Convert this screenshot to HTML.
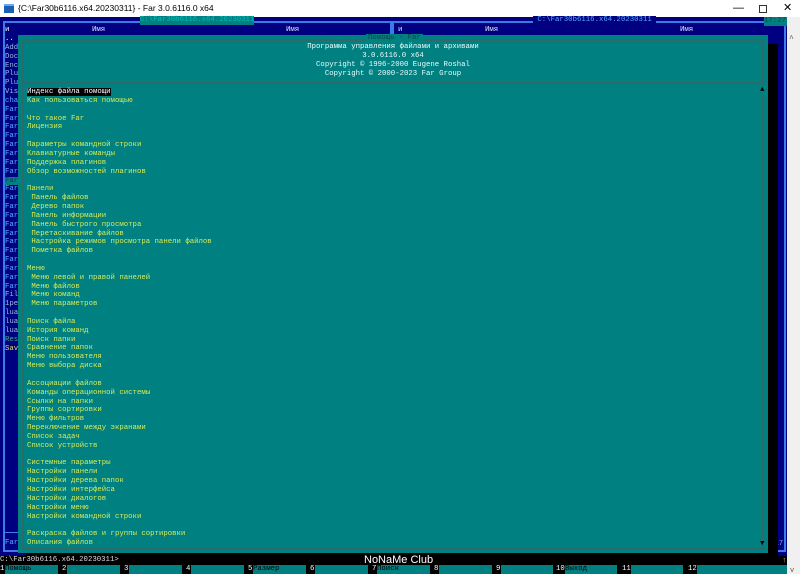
<!DOCTYPE html>
<html><head><meta charset="utf-8"><style>
*{margin:0;padding:0;box-sizing:border-box}
body{width:800px;height:574px;overflow:hidden;background:#fff;position:relative;font-family:"Liberation Mono","DejaVu Sans Mono",monospace;font-size:7.33px;line-height:8.84px}
.a{position:absolute;white-space:pre}
#tb{position:absolute;left:0;top:0;width:800px;height:17px;background:#fff;font-family:"Liberation Sans","DejaVu Sans",sans-serif;font-size:8.5px;line-height:17px;color:#000}
#con{position:absolute;left:0;top:17px;width:787px;height:557px;background:#000080}
#sb{position:absolute;left:787px;top:17px;width:13px;height:557px;background:#f0f0f0}
.pl{position:absolute;border:1px solid #3c7ce6}
.lc{color:#5fa8ff}
.ht{color:#d6ec58}
</style></head><body>
<div id="tb"><span style="position:absolute;left:4px;top:4px;width:10px;height:9px;background:#1a5fb4;border-top:2px solid #6aa8f0"></span><span style="position:absolute;left:18px">{C:\Far30b6116.x64.20230311} - Far 3.0.6116.0 x64</span><span style="position:absolute;left:733px;font-size:11px">—</span><span style="position:absolute;left:759px;top:5px;width:8px;height:8px;border:1px solid #333"></span><span style="position:absolute;left:783px;font-size:11px">✕</span></div>
<div id="con"></div>
<div id="sb"><span class="a" style="left:2px;top:19px;color:#555;font-size:8px">^</span><span class="a" style="left:3px;top:550px;color:#555;font-size:7px">v</span></div>
<div class="pl" style="left:3px;top:21px;width:389px;height:531px;border-width:2px;border-style:double;border-color:#3c7ce6"></div>
<div class="pl" style="left:392px;top:21px;width:394px;height:531px;border-width:2px;border-style:double;border-color:#3c7ce6"></div>
<div class="a" style="left:140px;top:16px;background:#008080;color:#00bcbc">C:\Far30b6116.x64.20230311</div>
<div class="a" style="left:533px;top:16px;background:#000080;color:#55aaff"> C:\Far30b6116.x64.20230311 </div>
<div class="a" style="left:764px;top:17px;width:23px;background:#008080;color:#0a4a4a">17:27</div>
<div class="a" style="left:5px;top:26px;color:#fff">и</div>
<div class="a" style="left:92px;top:26px;color:#e0e0ff">Имя</div>
<div class="a" style="left:286px;top:26px;color:#e0e0ff">Имя</div>
<div class="a" style="left:398px;top:26px;color:#e0e0ff">и</div>
<div class="a" style="left:485px;top:26px;color:#e0e0ff">Имя</div>
<div class="a" style="left:680px;top:26px;color:#e0e0ff">Имя</div>
<div class="a lc" style="left:5px;top:35px"><span style="color:#fff">..</span>
<span style="color:#9bd">Add
Doc
Enc
Plu
Plu
Vis</span>
cha
Far
Far
Far
Far
Far
Far
Far
Far
<span style="background:#008080;color:#0a3a6a">Far</span>
Far
Far
Far
Far
Far
Far
Far
Far
Far
Far
Far
Far
<span style="color:#9bd">Fil
1pe
lua
lua
lua</span>
<span style="color:#4a9">Res</span>
<span style="color:#dd6">Sav</span></div>
<div class="a" style="left:3px;top:532px;width:16px;height:18px;border-top:1px solid #3c7ce6"></div>
<div class="a lc" style="left:5px;top:539px">Far</div>
<div class="a" style="left:770px;top:540px;color:#8ad">:17</div>
<div style="position:absolute;left:26px;top:44px;width:752px;height:512px;background:#000"></div>
<div style="position:absolute;left:18px;top:35px;width:750px;height:518px;background:#008080"></div>
<div style="position:absolute;left:22px;top:39px;width:742px;height:511px;border:1px solid #2d6a6a;border-width:2px;border-style:double"></div>
<div style="position:absolute;left:22px;top:82px;width:742px;height:2px;background:#2d6a6a"></div>
<div class="a" style="left:366px;top:34px;background:#008080;color:#144;padding:0 2px">Помощь - Far</div>
<div class="a" style="left:0;top:43px;width:786px;text-align:center;color:#e8ffff">Программа управления файлами и архивами
3.0.6116.0 x64
Copyright © 1996-2000 Eugene Roshal
Copyright © 2000-2023 Far Group</div>
<div class="a" style="left:760px;top:86px;color:#000;background:#008080">▲</div>
<div class="a" style="left:760px;top:540px;color:#000">▼</div>
<div class="a ht" style="left:27px;top:88px"><span style="background:#000;color:#fff">Индекс файла помощи</span>
Как пользоваться помощью

Что такое Far
Лицензия

Параметры командной строки
Клавиатурные команды
Поддержка плагинов
Обзор возможностей плагинов

Панели
 Панель файлов
 Дерево папок
 Панель информации
 Панель быстрого просмотра
 Перетаскивание файлов
 Настройка режимов просмотра панели файлов
 Пометка файлов

Меню
 Меню левой и правой панелей
 Меню файлов
 Меню команд
 Меню параметров

Поиск файла
История команд
Поиск папки
Сравнение папок
Меню пользователя
Меню выбора диска

Ассоциации файлов
Команды операционной системы
Ссылки на папки
Группы сортировки
Меню фильтров
Переключение между экранами
Список задач
Список устройств

Системные параметры
Настройки панели
Настройки дерева папок
Настройки интерфейса
Настройки диалогов
Настройки меню
Настройки командной строки

Раскраска файлов и группы сортировки
Описания файлов</div>
<div style="position:absolute;left:0;top:556px;width:787px;height:18px;background:#000"></div>
<div class="a" style="left:0;top:556px;color:#ddd">C:\Far30b6116.x64.20230311&gt;</div>
<div class="a" style="left:782px;top:557px;color:#ccc">↑</div>
<div style="position:absolute;left:0;top:565px;width:787px;height:9px">
<div class="a" style="left:0;top:0;color:#fff">1</div><div class="a" style="left:5px;top:0;width:53px;height:9px;background:#008080;color:#000">Помощь</div>
<div class="a" style="left:62px;top:0;color:#fff">2</div><div class="a" style="left:67px;top:0;width:53px;height:9px;background:#008080"></div>
<div class="a" style="left:124px;top:0;color:#fff">3</div><div class="a" style="left:129px;top:0;width:53px;height:9px;background:#008080"></div>
<div class="a" style="left:186px;top:0;color:#fff">4</div><div class="a" style="left:191px;top:0;width:53px;height:9px;background:#008080"></div>
<div class="a" style="left:248px;top:0;color:#fff">5</div><div class="a" style="left:253px;top:0;width:53px;height:9px;background:#008080;color:#000">Размер</div>
<div class="a" style="left:310px;top:0;color:#fff">6</div><div class="a" style="left:315px;top:0;width:53px;height:9px;background:#008080"></div>
<div class="a" style="left:372px;top:0;color:#fff">7</div><div class="a" style="left:377px;top:0;width:53px;height:9px;background:#008080;color:#000">Поиск</div>
<div class="a" style="left:434px;top:0;color:#fff">8</div><div class="a" style="left:439px;top:0;width:53px;height:9px;background:#008080"></div>
<div class="a" style="left:496px;top:0;color:#fff">9</div><div class="a" style="left:501px;top:0;width:52px;height:9px;background:#008080"></div>
<div class="a" style="left:556px;top:0;color:#fff">10</div><div class="a" style="left:565px;top:0;width:52px;height:9px;background:#008080;color:#000">Выход</div>
<div class="a" style="left:622px;top:0;color:#fff">11</div><div class="a" style="left:631px;top:0;width:52px;height:9px;background:#008080"></div>
<div class="a" style="left:688px;top:0;color:#fff">12</div><div class="a" style="left:697px;top:0;width:90px;height:9px;background:#008080"></div>
</div>
<div class="a" style="left:364px;top:554px;color:#fff;font-family:'Liberation Sans',sans-serif;font-size:11px;line-height:13px">NoNaMe Club</div>
</body></html>
